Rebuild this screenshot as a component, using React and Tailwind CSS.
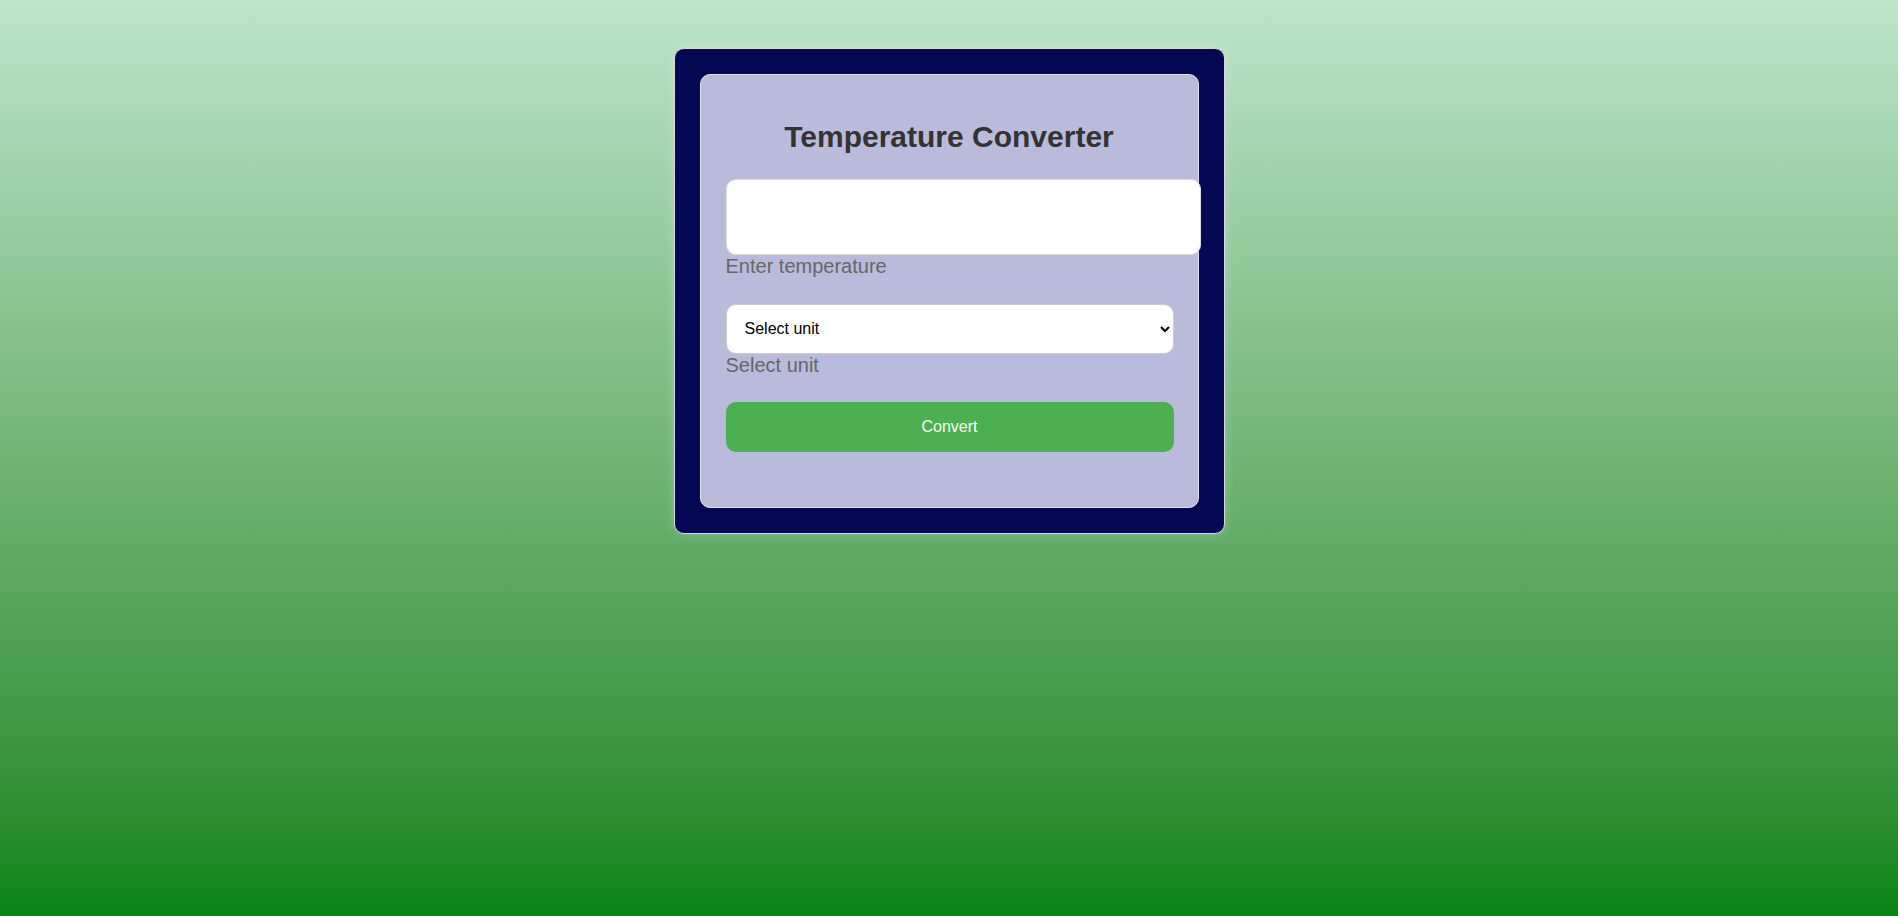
import { useState } from "react";

const App = () => {
  const [temp, setTemp] = useState("");
  const [unit, setUnit] = useState("");

  return (
    <div
      className="min-h-screen w-full bg-gradient-to-b from-[#bee4ca] to-[#088414] pt-[48px]"
      style={{ fontFamily: '"Liberation Sans", Arial, sans-serif' }}
    >
      {/* Outer navy frame */}
      <div className="mx-auto w-[551px] rounded-[10px] border border-[#d8d8e0] bg-[#050955] p-[25px] shadow-[0_0_12px_rgba(255,255,255,0.25)]">
        {/* Inner card */}
        <div className="rounded-[10px] border border-[#e4e4f0] bg-[#babadb] px-[25px] pt-[25px] pb-[55px]">
          <h2 className="mt-[20px] mb-[24px] text-center text-[30px] leading-[34.5px] font-bold text-[#333]">
            Temperature Converter
          </h2>

          <input
            type="number"
            value={temp}
            onChange={(e) => setTemp(e.target.value)}
            className="block h-[76px] w-[475px] rounded-[10px] border border-[#ddd] bg-white px-3 text-base outline-none"
          />
          <label className="mb-[26px] block text-[20px] leading-[23px] text-[#666]">
            Enter temperature
          </label>

          <select
            value={unit}
            onChange={(e) => setUnit(e.target.value)}
            className="block h-[50px] w-[448px] rounded-[10px] border border-[#ccc] bg-white px-[14px] text-base text-black"
          >
            <option value="">Select unit</option>
            <option value="c">Celsius</option>
            <option value="f">Fahrenheit</option>
            <option value="k">Kelvin</option>
          </select>
          <label className="mb-[25px] block text-[20px] leading-[23px] text-[#666]">
            Select unit
          </label>

          <button className="block h-[50px] w-[448px] rounded-[10px] bg-[#4caf50] text-base text-white">
            Convert
          </button>
        </div>
      </div>
    </div>
  );
};

export default App;
